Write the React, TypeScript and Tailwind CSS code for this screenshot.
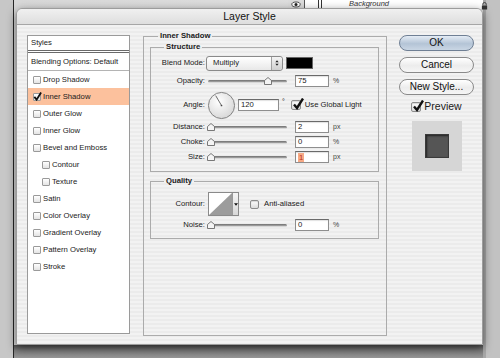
import React from 'react'

const styleItems = [
  { label: 'Drop Shadow' },
  { label: 'Inner Shadow', checked: true, active: true },
  { label: 'Outer Glow' },
  { label: 'Inner Glow' },
  { label: 'Bevel and Emboss' },
  { label: 'Contour', indent: true },
  { label: 'Texture', indent: true },
  { label: 'Satin' },
  { label: 'Color Overlay' },
  { label: 'Gradient Overlay' },
  { label: 'Pattern Overlay' },
  { label: 'Stroke' },
]

function SmallBox({ checked }: { checked?: boolean }) {
  return (
    <span className="relative block w-[8px] h-[8px] shrink-0 border border-[#9a9a9a] bg-[linear-gradient(#ffffff,#e4e4e4)] rounded-[1px]">
      {checked && (
        <svg viewBox="0 0 10 10" className="absolute left-[-1px] top-[-2px] w-[9px] h-[9px]">
          <path d="M1.5 5.5 L4 8.5 L9 0.5" fill="none" stroke="#111" strokeWidth="2" />
        </svg>
      )}
    </span>
  )
}

function AquaCheck({ checked, size = 10 }: { checked?: boolean; size?: number }) {
  return (
    <span
      className="relative block shrink-0 border border-[#8c8c8c] bg-[linear-gradient(#ffffff,#dcdcdc)] rounded-[2px] shadow-[inset_0_1px_1px_rgba(0,0,0,0.15)]"
      style={{ width: size, height: size }}
    >
      {checked && (
        <svg viewBox="0 0 12 12" className="absolute left-0 top-[-3px]" style={{ width: size + 2, height: size + 2 }}>
          <path d="M2 6.5 L5 10 L11 0.5" fill="none" stroke="#111" strokeWidth="2.4" />
        </svg>
      )}
    </span>
  )
}

function Slider({ pos }: { pos: number }) {
  return (
    <div className="relative w-[79px] h-[10px] flex items-center">
      <div className="w-full h-[3px] rounded-full bg-[linear-gradient(#6e6e6e,#a8a8a8)] border-b border-[#d8d8d8]" />
      <svg viewBox="0 0 8 8" className="absolute top-[1px] w-[8px] h-[8px]" style={{ left: pos - 4 }}>
        <path d="M0.5 3.5 L4 0.5 L7.5 3.5 L7.5 7.5 L0.5 7.5 Z" fill="#f4f4f4" stroke="#6a6a6a" strokeWidth="0.9" />
      </svg>
    </div>
  )
}

function Field({ value, width = 34, highlight }: { value: string; width?: number; highlight?: boolean }) {
  return (
    <div
      className="h-[12px] flex items-center bg-white border border-[#8e8e8e] border-t-[#6a6a6a] pl-[2px] shadow-[inset_0_1px_1px_rgba(0,0,0,0.12)]"
      style={{ width }}
    >
      {highlight ? <span className="bg-[#f7a985] text-[#b8321c] px-[1px] leading-[9px]">{value}</span> : value}
    </div>
  )
}

function Row({ label, h = 14, children }: { label: string; h?: number; children: React.ReactNode }) {
  return (
    <div className="flex items-center" style={{ height: h }}>
      <span className="w-[54px] text-right shrink-0">{label}</span>
      {children}
    </div>
  )
}

function SliderRow({ label, pos, value, unit, highlight }: { label: string; pos: number; value: string; unit: string; highlight?: boolean }) {
  return (
    <Row label={label}>
      <div className="ml-[3px]">
        <Slider pos={pos} />
      </div>
      <div className="ml-[8px]">
        <Field value={value} highlight={highlight} />
      </div>
      <span className="ml-[4px] text-[7px] text-[#444]">{unit}</span>
    </Row>
  )
}

function Pill({ children, primary }: { children: React.ReactNode; primary?: boolean }) {
  return (
    <button
      className={`w-[75px] h-[16px] rounded-full border text-[10px] leading-none flex items-center justify-center text-[#111] ${
        primary
          ? 'border-[#6f7f94] bg-[linear-gradient(#e4ecf5,#b4c4d6_55%,#c9d6e4)]'
          : 'border-[#8a8a8a] bg-[linear-gradient(#ffffff,#ececec_55%,#f6f6f6)]'
      }`}
    >
      {children}
    </button>
  )
}

export default function App() {
  return (
    <div className="relative w-[500px] h-[358px] overflow-hidden bg-[#8c8c8c] font-['Liberation_Sans',Arial,sans-serif] text-[7.7px] text-[#1a1a1a]">
      {/* desktop behind the dialog */}
      <div className="absolute left-0 top-0 w-[13px] h-full bg-[#c7c7c7]" />
      <div className="absolute left-[13px] top-0 w-[1px] h-full bg-[#262626]" />
      <div className="absolute left-[14px] top-0 right-0 h-[345px] bg-[linear-gradient(90deg,#d8d8d8,#e2e2e2)]" />
      <div className="absolute left-[14px] top-[345px] right-[17px] bottom-0 bg-[linear-gradient(#555,#7c7c7c_40%,#979797)]" />
      <div className="absolute right-0 top-0 w-[17px] h-full bg-[#c2c2c2] border-l-[3px] border-[#a8a8a8]" />

      {/* layers palette peeking out at the top */}
      <div className="absolute left-[288px] top-0 w-[195px] h-[9px] bg-white flex items-stretch">
        <div className="w-[16px] bg-[#dcdcdc] flex items-center justify-center">
          <svg viewBox="0 0 12 8" className="w-[10px] h-[7px]">
            <ellipse cx="6" cy="4" rx="5" ry="3" fill="#fff" stroke="#333" strokeWidth="1" />
            <circle cx="6" cy="4" r="1.8" fill="#222" />
          </svg>
        </div>
        <div className="w-[1px] bg-[#555]" />
        <div className="w-[13px]" />
        <div className="w-[1px] bg-[#333]" />
        <div className="w-[2px]" />
        <div className="w-[1px] bg-[#333]" />
        <span className="ml-[27px] italic text-[7.5px] leading-[8px] text-[#333]">Background</span>
      </div>
      <svg viewBox="0 0 8 9" className="absolute left-[481px] top-[2px] w-[7px] h-[8px]">
        <path d="M2 4 V2.5 a2 2 0 0 1 4 0 V4" fill="none" stroke="#333" strokeWidth="1" />
        <rect x="1" y="4" width="6" height="4.5" fill="#333" />
      </svg>

      {/* dialog */}
      <div className="absolute left-[16px] top-[8px] w-[467px] h-[337px] rounded-t-[6px] border border-[#9c9c9c] bg-[repeating-linear-gradient(180deg,#f2f2f2_0px,#f2f2f2_2px,#ebebeb_2px,#ebebeb_4px)] shadow-[0_3px_10px_rgba(0,0,0,0.55)] flex flex-col">
        <div className="h-[16px] shrink-0 rounded-t-[6px] border-b border-[#a6a6a6] bg-[linear-gradient(#f0f0f0,#dedede)] flex items-center justify-center text-[10.5px] text-[#111]">
          Layer Style
        </div>

        <div className="flex items-start">
          {/* style list */}
          <div className="ml-[10px] mt-[10px] w-[103px] h-[299px] bg-white border border-[#9a9a9a] flex flex-col">
            <div className="h-[17px] flex items-center pl-[3px] border-b-[3px] border-double border-[#6a6a6a]">Styles</div>
            <div className="h-[18px] flex items-center pl-[3px] border-b border-[#b4b4b4]">Blending Options: Default</div>
            {styleItems.map((item) => (
              <div
                key={item.label}
                className={`h-[17px] flex items-center gap-[2px] ${item.indent ? 'pl-[14px]' : 'pl-[5px]'} ${
                  item.active ? 'bg-[#fcc19d]' : ''
                }`}
              >
                <SmallBox checked={item.checked} />
                <span>{item.label}</span>
              </div>
            ))}
          </div>

          {/* settings */}
          <fieldset className="ml-[13px] mt-[6px] w-[244px] h-[305px] border border-[#ababab] px-[6px]">
            <legend className="ml-[8px] px-[2px] leading-[10px] font-bold">Inner Shadow</legend>

            <fieldset className="mt-[1px] w-[229px] border border-[#ababab] pt-[3px] pb-[7px]">
              <legend className="ml-[13px] px-[2px] leading-[10px] font-bold">Structure</legend>

              <Row label="Blend Mode:" h={16}>
                <div className="ml-[1px] w-[77px] h-[15px] rounded-[3px] border border-[#8a8a8a] bg-[linear-gradient(#ffffff,#e8e8e8)] flex items-center">
                  <span className="flex-1 pl-[6px]">Multiply</span>
                  <div className="w-[11px] h-full border-l border-[#a0a0a0] bg-[linear-gradient(#f4f4f4,#cfcfcf)] rounded-r-[3px] flex items-center justify-center">
                    <svg viewBox="0 0 6 10" className="w-[4px] h-[8px]">
                      <path d="M0.5 4 L3 1 L5.5 4 Z M0.5 6 L3 9 L5.5 6 Z" fill="#222" />
                    </svg>
                  </div>
                </div>
                <div className="ml-[3px] w-[27px] h-[12px] bg-black border border-[#666]" />
              </Row>

              <div className="mt-[3px]">
                <SliderRow label="Opacity:" pos={60} value="75" unit="%" />
              </div>

              <div className="mt-[2px]">
                <Row label="Angle:" h={30}>
                  <svg viewBox="0 0 30 30" className="ml-[2px] w-[29px] h-[29px]">
                    <defs>
                      <radialGradient id="dial" cx="40%" cy="35%" r="70%">
                        <stop offset="0%" stopColor="#ffffff" />
                        <stop offset="100%" stopColor="#d6d6d6" />
                      </radialGradient>
                    </defs>
                    <circle cx="15" cy="15" r="13.5" fill="url(#dial)" stroke="#7e7e7e" strokeWidth="1" />
                    <line x1="15" y1="15" x2="9" y2="4.8" stroke="#555" strokeWidth="0.9" />
                    <circle cx="15" cy="15" r="0.9" fill="#444" />
                  </svg>
                  <div className="ml-[2px]">
                    <Field value="120" width={41} />
                  </div>
                  <span className="ml-[3px] -mt-[6px] text-[7px]">°</span>
                  <div className="ml-[6px]">
                    <AquaCheck checked />
                  </div>
                  <span className="ml-[4px]">Use Global Light</span>
                </Row>
              </div>

              <SliderRow label="Distance:" pos={3} value="2" unit="px" />
              <div className="mt-[1px]">
                <SliderRow label="Choke:" pos={3} value="0" unit="%" />
              </div>
              <div className="mt-[1px]">
                <SliderRow label="Size:" pos={3} value="1" unit="px" highlight />
              </div>
            </fieldset>

            <fieldset className="mt-[4px] w-[229px] border border-[#ababab] pt-[6px] pb-[6px]">
              <legend className="ml-[13px] px-[2px] leading-[10px] font-bold">Quality</legend>

              <Row label="Contour:" h={24}>
                <div className="ml-[3px] h-[24px] flex border border-[#8a8a8a] bg-white">
                  <svg viewBox="0 0 23 22" className="w-[23px] h-[22px]">
                    <polygon points="0,22 23,0 23,22" fill="#9c9c9c" />
                  </svg>
                  <div className="w-[6px] border-l border-[#9a9a9a] bg-[linear-gradient(#f6f6f6,#d8d8d8)] flex items-center justify-center">
                    <svg viewBox="0 0 6 4" className="w-[4px] h-[3px]">
                      <path d="M0 0 L6 0 L3 4 Z" fill="#111" />
                    </svg>
                  </div>
                </div>
                <div className="ml-[11px]">
                  <AquaCheck size={9} />
                </div>
                <span className="ml-[5px]">Anti-aliased</span>
              </Row>

              <div className="mt-[2px]">
                <SliderRow label="Noise:" pos={3} value="0" unit="%" />
              </div>
            </fieldset>
          </fieldset>

          {/* buttons */}
          <div className="ml-[12px] mt-[10px] w-[75px] flex flex-col items-center">
            <Pill primary>OK</Pill>
            <div className="mt-[6px]">
              <Pill>Cancel</Pill>
            </div>
            <div className="mt-[6px]">
              <Pill>New Style...</Pill>
            </div>
            <div className="mt-[4px] flex items-center gap-[3px] text-[10.5px]">
              <AquaCheck checked size={10} />
              <span>Preview</span>
            </div>
            <div className="mt-[6px] w-[50px] h-[50px] bg-[#d6d6d6] flex items-center justify-center">
              <div className="w-[24px] h-[24px] bg-[#555] border border-[#3a3a3a] shadow-[inset_1px_1px_2px_rgba(0,0,0,0.6)]" />
            </div>
          </div>
        </div>
      </div>
    </div>
  )
}
